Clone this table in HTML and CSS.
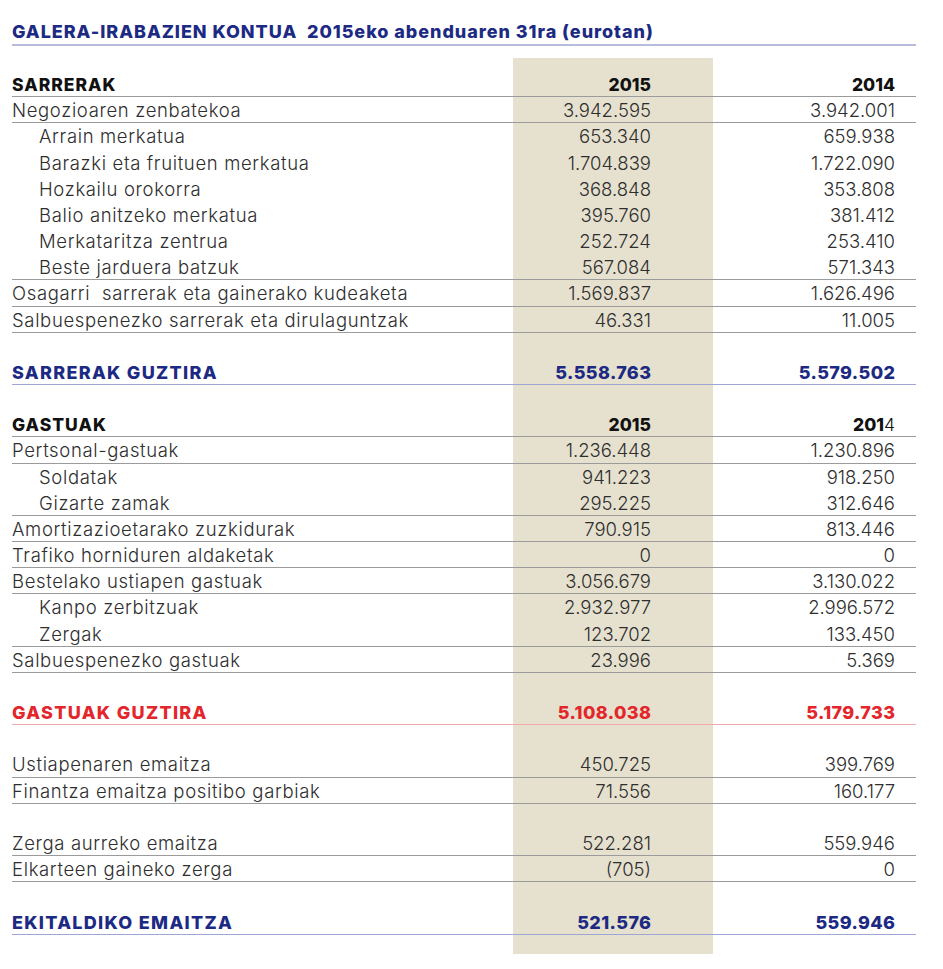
FILE: index.html
```html
<!DOCTYPE html>
<html lang="eu">
<head>
<meta charset="utf-8">
<title>Galera-irabazien kontua</title>
<link rel="stylesheet" href="styles.css">
</head>
<body>
<div class="page">
  <h1 class="title"><span class="title-main">GALERA-IRABAZIEN KONTUA</span>&nbsp;&nbsp;2015eko abenduaren 31ra (eurotan)</h1>
  <div class="sheet">
    <div class="row head line"><span class="lbl">SARRERAK</span><span class="n">2015</span><span class="n2">2014</span></div>
    <div class="row line"><span class="lbl">Negozioaren zenbatekoa</span><span class="n">3.942.595</span><span class="n2">3.942.001</span></div>
    <div class="row sub"><span class="lbl">Arrain merkatua</span><span class="n">653.340</span><span class="n2">659.938</span></div>
    <div class="row sub"><span class="lbl">Barazki eta fruituen merkatua</span><span class="n">1.704.839</span><span class="n2">1.722.090</span></div>
    <div class="row sub"><span class="lbl">Hozkailu orokorra</span><span class="n">368.848</span><span class="n2">353.808</span></div>
    <div class="row sub"><span class="lbl">Balio anitzeko merkatua</span><span class="n">395.760</span><span class="n2">381.412</span></div>
    <div class="row sub"><span class="lbl">Merkataritza zentrua</span><span class="n">252.724</span><span class="n2">253.410</span></div>
    <div class="row sub line"><span class="lbl">Beste jarduera batzuk</span><span class="n">567.084</span><span class="n2">571.343</span></div>
    <div class="row line"><span class="lbl">Osagarri&nbsp; sarrerak eta gainerako kudeaketa</span><span class="n">1.569.837</span><span class="n2">1.626.496</span></div>
    <div class="row line"><span class="lbl">Salbuespenezko sarrerak eta dirulaguntzak</span><span class="n">46.331</span><span class="n2">11.005</span></div>
    <div class="row"></div>
    <div class="row total blue"><span class="lbl">SARRERAK GUZTIRA</span><span class="n">5.558.763</span><span class="n2">5.579.502</span></div>
    <div class="row"></div>
    <div class="row head line"><span class="lbl">GASTUAK</span><span class="n">2015</span><span class="n2">201<span class="light">4</span></span></div>
    <div class="row line"><span class="lbl">Pertsonal-gastuak</span><span class="n">1.236.448</span><span class="n2">1.230.896</span></div>
    <div class="row sub"><span class="lbl">Soldatak</span><span class="n">941.223</span><span class="n2">918.250</span></div>
    <div class="row sub line"><span class="lbl">Gizarte zamak</span><span class="n">295.225</span><span class="n2">312.646</span></div>
    <div class="row line"><span class="lbl">Amortizazioetarako zuzkidurak</span><span class="n">790.915</span><span class="n2">813.446</span></div>
    <div class="row line"><span class="lbl">Trafiko horniduren aldaketak</span><span class="n">0</span><span class="n2">0</span></div>
    <div class="row line"><span class="lbl">Bestelako ustiapen gastuak</span><span class="n">3.056.679</span><span class="n2">3.130.022</span></div>
    <div class="row sub"><span class="lbl">Kanpo zerbitzuak</span><span class="n">2.932.977</span><span class="n2">2.996.572</span></div>
    <div class="row sub line"><span class="lbl">Zergak</span><span class="n">123.702</span><span class="n2">133.450</span></div>
    <div class="row line"><span class="lbl">Salbuespenezko gastuak</span><span class="n">23.996</span><span class="n2">5.369</span></div>
    <div class="row"></div>
    <div class="row total red"><span class="lbl">GASTUAK GUZTIRA</span><span class="n">5.108.038</span><span class="n2">5.179.733</span></div>
    <div class="row"></div>
    <div class="row line"><span class="lbl">Ustiapenaren emaitza</span><span class="n">450.725</span><span class="n2">399.769</span></div>
    <div class="row line"><span class="lbl">Finantza emaitza positibo garbiak</span><span class="n">71.556</span><span class="n2">160.177</span></div>
    <div class="row"></div>
    <div class="row line"><span class="lbl">Zerga aurreko emaitza</span><span class="n">522.281</span><span class="n2">559.946</span></div>
    <div class="row line"><span class="lbl">Elkarteen gaineko zerga</span><span class="n">(705)</span><span class="n2">0</span></div>
    <div class="row"></div>
    <div class="row total blue"><span class="lbl">EKITALDIKO EMAITZA</span><span class="n">521.576</span><span class="n2">559.946</span></div>
  </div>
</div>
</body>
</html>
```
FILE: styles.css
```css
html, body {
  margin: 0;
  padding: 0;
  background: #ffffff;
}

.page {
  width: 904px;
  padding: 0 0 0 12px;
  font-family: "Inter", "Lato", sans-serif;
  color: #2e2e2e;
}

.title {
  margin: 0;
  padding-top: 22px;
  padding-bottom: 3px;
  border-bottom: 2px solid #b7bcdd;
  font-family: "Inter", sans-serif;
  font-weight: 800;
  font-size: 18px;
  line-height: 19px;
  color: #1d2a83;
  letter-spacing: 0.95px;
  white-space: nowrap;
}

.sheet {
  margin-top: 12px;
  padding-top: 13px;
  padding-bottom: 19px;
  background: linear-gradient(to right,
    transparent 0, transparent 501px,
    #e6e1cf 501px, #e6e1cf 701px,
    transparent 701px);
}

.row {
  display: grid;
  grid-template-columns: 501px 200px 203px;
  box-sizing: border-box;
  height: 26.18px;
  padding-top: 1px;
  border-bottom: 1px solid transparent;
  font-size: 18.5px;
  font-weight: 300;
  line-height: 25px;
  white-space: nowrap;
}

.lbl {
  letter-spacing: 0.65px;
}

.row.sub > .lbl {
  padding-left: 27px;
}

.row.line {
  border-bottom-color: #9b9b9b;
}

.n {
  text-align: right;
  padding-right: 62px;
}

.n2 {
  text-align: right;
  padding-right: 21px;
}

.head {
  font-weight: 800;
  font-size: 17.5px;
  color: #111111;
}

.head .lbl {
  letter-spacing: 1px;
}

.head .light {
  font-weight: 300;
}

.total {
  font-weight: 800;
  font-size: 18px;
}

.total .lbl {
  letter-spacing: 1.3px;
}

.total .n,
.total .n2 {
  letter-spacing: 0.4px;
}

.total .n {
  padding-right: 61.6px;
}

.total .n2 {
  padding-right: 20.6px;
}

.total.blue {
  color: #1d2a83;
  border-bottom-color: #9ea6d6;
}

.total.red {
  color: #e3262b;
  border-bottom-color: #f2a7a9;
}
```
